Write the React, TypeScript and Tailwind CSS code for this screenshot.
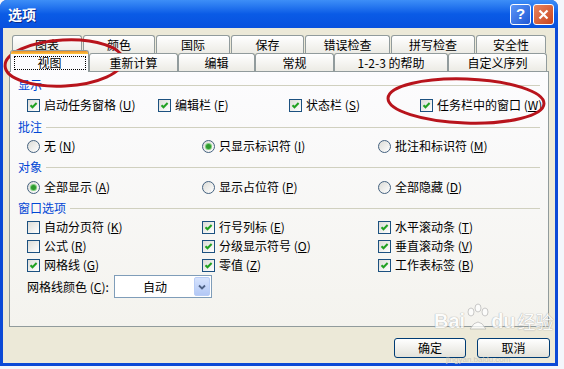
import React from "react";

const row1 = [
  { label: "图表", w: "w-[70px]" },
  { label: "颜色", w: "w-[72px]" },
  { label: "国际", w: "w-[74px]" },
  { label: "保存", w: "w-[73px]" },
  { label: "错误检查", w: "w-[85px]" },
  { label: "拼写检查", w: "w-[84px]" },
  { label: "安全性", w: "w-[70px]" },
];

const row2 = [
  { label: "重新计算", w: "w-[89px]" },
  { label: "编辑", w: "w-[77px]" },
  { label: "常规", w: "w-[79px]" },
  { label: "1-2-3 的帮助", w: "w-[114px]" },
  { label: "自定义序列", w: "w-[99px]" },
];

const tabCls =
  "h-[18px] flex items-center justify-center border border-b-0 border-[#919b9c] rounded-t-[3px] bg-linear-to-b from-white to-[#ecebe5]";

function Key({ text, k }: { text: string; k: string }) {
  return (
    <span className="whitespace-nowrap">
      {text} (<u>{k}</u>)
    </span>
  );
}

function Check({ on, text, k }: { on: boolean; text: string; k: string }) {
  return (
    <div className="flex items-center gap-[4px] h-[14px]">
      <div className="w-[13px] h-[13px] shrink-0 border border-[#1c5180] bg-linear-to-br from-[#dcdcd7] to-white flex items-center justify-center">
        {on && (
          <svg width="9" height="9" viewBox="0 0 9 9">
            <path d="M1.5 4.2 L3.5 6.3 L7.6 2" fill="none" stroke="#21a121" strokeWidth="2" />
          </svg>
        )}
      </div>
      <Key text={text} k={k} />
    </div>
  );
}

function Radio({ on, text, k }: { on: boolean; text: string; k: string }) {
  return (
    <div className="flex items-center gap-[4px] h-[14px]">
      <div className="w-[13px] h-[13px] shrink-0 rounded-full border border-[#44617f] bg-linear-to-br from-[#dcdcd7] to-white flex items-center justify-center">
        {on && <div className="w-[5px] h-[5px] rounded-full bg-[#2f9a2f] ring-1 ring-[#7fcf7f]" />}
      </div>
      <Key text={text} k={k} />
    </div>
  );
}

function Section({ title, className }: { title: string; className: string }) {
  return (
    <div className={"flex items-center h-[14px] pr-[8px] " + className}>
      <span className="text-[#0046d5] mr-[4px]">{title}</span>
      <div className="flex-1 h-px bg-[#d0d0bf]" />
    </div>
  );
}

export default function App() {
  return (
    <div className="w-[564px] h-[369px] bg-[#f3f6fb] relative overflow-hidden font-['Noto_Sans_CJK_SC',sans-serif] text-[12px] leading-[14px] text-black">
      <div className="w-[558px] h-[366px] flex flex-col bg-[#0b49d6] rounded-t-[7px]">
        {/* title bar */}
        <div className="h-[28px] shrink-0 flex items-center pl-[8px] pr-[4px] rounded-t-[7px] bg-linear-to-b from-[#3d8ef7] via-[#0a5be6] to-[#0851de]">
          <span className="text-white font-bold text-[14px] [text-shadow:1px_1px_0_#0a2a8a]">选项</span>
          <div className="ml-auto flex gap-[2px]">
            <div className="w-[21px] h-[21px] rounded-[3px] border border-white bg-linear-to-br from-[#5b96f7] to-[#2157d4] flex items-center justify-center text-white font-bold text-[15px] font-['Liberation_Sans',sans-serif]">
              ?
            </div>
            <div className="w-[21px] h-[21px] rounded-[3px] border border-white bg-linear-to-br from-[#e7845e] to-[#c8431b] flex items-center justify-center">
              <svg width="11" height="11" viewBox="0 0 11 11">
                <path d="M1.5 1.5 L9.5 9.5 M9.5 1.5 L1.5 9.5" stroke="white" strokeWidth="2.2" />
              </svg>
            </div>
          </div>
        </div>

        {/* body */}
        <div className="flex-1 mx-[3px] mb-[3px] bg-[#ece9d8] px-[6px] pt-[7px] flex flex-col">
          <div className="flex gap-px ml-[3px]">
            {row1.map((t) => (
              <div key={t.label} className={tabCls + " " + t.w}>
                {t.label}
              </div>
            ))}
          </div>
          <div className="flex h-[19px] items-start -mb-px relative z-10 ml-px">
            <div className="self-end w-[79px] h-[22px] border border-b-0 border-[#919b9c] rounded-t-[3px] bg-[#fcfcfe] flex flex-col items-center">
              <div className="w-full h-[3px] bg-linear-to-b from-[#e68b2c] to-[#ffc83c] rounded-t-[2px]" />
              <div className="mt-[2px] w-[72px] h-[14px] border border-dotted border-black flex items-center justify-center">
                视图
              </div>
            </div>
            {row2.map((t) => (
              <div key={t.label} className={tabCls + " " + t.w}>
                {t.label}
              </div>
            ))}
          </div>

          {/* panel */}
          <div className="h-[256px] border border-[#919b9c] bg-linear-to-b from-[#fcfcfe] to-[#f4f3ee] pl-[8px] pt-[6px] flex flex-col">
            <Section title="显示" className="" />
            <div className="mt-[6px] pl-[9px] grid grid-cols-[131px_131px_131px_1fr]">
              <Check on text="启动任务窗格" k="U" />
              <Check on text="编辑栏" k="F" />
              <Check on text="状态栏" k="S" />
              <Check on text="任务栏中的窗口" k="W" />
            </div>
            <Section title="批注" className="mt-[8px]" />
            <div className="mt-[5px] pl-[9px] grid grid-cols-[175px_176px_1fr]">
              <Radio on={false} text="无" k="N" />
              <Radio on text="只显示标识符" k="I" />
              <Radio on={false} text="批注和标识符" k="M" />
            </div>
            <Section title="对象" className="mt-[7px]" />
            <div className="mt-[6px] pl-[9px] grid grid-cols-[175px_176px_1fr]">
              <Radio on text="全部显示" k="A" />
              <Radio on={false} text="显示占位符" k="P" />
              <Radio on={false} text="全部隐藏" k="D" />
            </div>
            <Section title="窗口选项" className="mt-[7px]" />
            <div className="mt-[5px] pl-[9px] grid grid-cols-[175px_176px_1fr] gap-y-[5px]">
              <Check on={false} text="自动分页符" k="K" />
              <Check on text="行号列标" k="E" />
              <Check on text="水平滚动条" k="T" />
              <Check on={false} text="公式" k="R" />
              <Check on text="分级显示符号" k="O" />
              <Check on text="垂直滚动条" k="V" />
              <Check on text="网格线" k="G" />
              <Check on text="零值" k="Z" />
              <Check on text="工作表标签" k="B" />
            </div>
            <div className="mt-[3px] pl-[9px] flex items-center h-[23px]">
              <span className="w-[87px] whitespace-nowrap">
                网格线颜色 (<u>C</u>):
              </span>
              <div className="w-[98px] h-[23px] border border-[#7f9db9] bg-white flex items-center p-px">
                <span className="flex-1 text-center">自动</span>
                <div className="w-[16px] h-full rounded-[2px] border border-[#b9cdf6] bg-linear-to-b from-[#d6e3fd] to-[#b3c8f5] flex items-center justify-center">
                  <svg width="8" height="6" viewBox="0 0 8 6">
                    <path d="M1 1.5 L4 4.5 L7 1.5" fill="none" stroke="#4d6185" strokeWidth="1.8" />
                  </svg>
                </div>
              </div>
            </div>
          </div>

          {/* buttons */}
          <div className="mt-[11px] flex justify-end gap-[11px] -mr-px">
            <div className="w-[72px] h-[20px] rounded-[3px] border border-[#003c74] bg-linear-to-b from-white to-[#e3e2da] flex items-center justify-center">
              确定
            </div>
            <div className="w-[73px] h-[20px] rounded-[3px] border border-[#003c74] bg-linear-to-b from-white to-[#e3e2da] flex items-center justify-center">
              取消
            </div>
          </div>
        </div>
      </div>

      {/* red marker ellipses */}
      <svg className="absolute left-0 top-0 pointer-events-none" width="564" height="369">
        <ellipse cx="64" cy="63" rx="59" ry="23" fill="none" stroke="#b8141c" strokeWidth="3" transform="rotate(-3 64 63)" />
        <ellipse cx="466" cy="101" rx="78" ry="22" fill="none" stroke="#b8141c" strokeWidth="3" transform="rotate(2 466 101)" />
      </svg>

      {/* watermark */}
      <div className="absolute left-[434px] top-[303px] flex items-end pointer-events-none opacity-75">
        <span className="text-white text-[20px] leading-[20px] font-bold font-['Liberation_Sans',sans-serif] [text-shadow:0_0_1px_#999,0_0_1px_#999]">
          Bai
        </span>
        <svg width="26" height="30" viewBox="0 0 26 30" className="-mb-[2px]">
          <g fill="white" stroke="#aaa" strokeWidth="0.8">
            <ellipse cx="6" cy="9" rx="3" ry="4" />
            <ellipse cx="13" cy="5" rx="3" ry="4" />
            <ellipse cx="20" cy="9" rx="3" ry="4" />
            <path d="M5 26 Q13 12 21 26 Z" />
          </g>
        </svg>
        <span className="text-white text-[20px] leading-[20px] font-bold font-['Liberation_Sans',sans-serif] [text-shadow:0_0_1px_#999,0_0_1px_#999]">
          du
        </span>
        <span className="ml-[2px] text-white text-[18px] leading-[20px] [text-shadow:0_0_1px_#999,0_0_1px_#999]">
          经验
        </span>
      </div>
      <span className="absolute left-[446px] top-[356px] text-[8px] leading-[8px] text-[#c9c7bb] font-['Liberation_Sans',sans-serif] pointer-events-none">
        jingyan.baidu.com
      </span>
    </div>
  );
}
